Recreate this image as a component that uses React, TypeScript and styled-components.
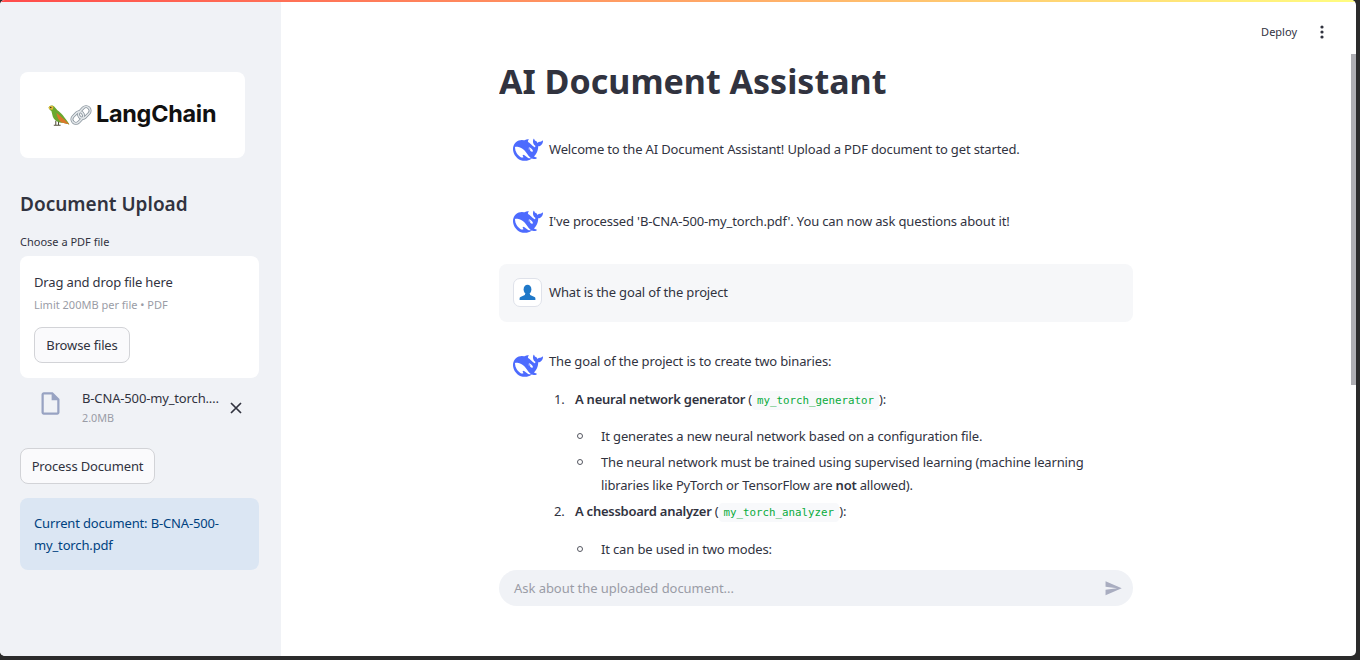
import styled, { createGlobalStyle } from 'styled-components';

const GlobalStyle = createGlobalStyle`
  html, body {
    margin: 0;
    padding: 0;
    background: #2b2b2b;
  }
  * {
    box-sizing: border-box;
  }
`;

const BODY_FONT = `"Noto Sans", "Lato", sans-serif`;

const Page = styled.div`
  width: 1360px;
  height: 660px;
  padding: 0 4px 4px 0;
  background: #2b2b2b;
  font-family: ${BODY_FONT};
  font-size: 13px;
  letter-spacing: -0.15px;
  color: #31333f;
  overflow: hidden;
`;

const Frame = styled.div`
  position: relative;
  display: flex;
  height: 100%;
  border-radius: 5px;
  overflow: hidden;
  background: #fff;
`;

const TopBar = styled.div`
  position: absolute;
  inset: 0 0 auto 0;
  height: 2px;
  background: linear-gradient(90deg, #ff4b4b, #fffd80);
`;

const Sidebar = styled.aside`
  flex: 0 0 281px;
  padding: 72px 22px 0 20px;
  background: #f0f2f6;
`;

const LogoCard = styled.div`
  display: flex;
  align-items: center;
  width: 225px;
  height: 86px;
  padding-left: 27px;
  border-radius: 8px;
  background: #fff;
`;

const LogoText = styled.span`
  margin: 0 0 3px 4px;
  font-family: "Inter", sans-serif;
  font-size: 23.4px;
  font-weight: 700;
  letter-spacing: -0.25px;
  color: #111;
`;

const SideHeading = styled.h2`
  margin: 31px 0 0;
  font-size: 19px;
  line-height: 30px;
  font-weight: 600;
  letter-spacing: 0;
`;

const FieldLabel = styled.div`
  margin-top: 15px;
  font-size: 11px;
  line-height: 16px;
  letter-spacing: 0;
`;

const DropZone = styled.div`
  margin-top: 6px;
  padding: 14px;
  height: 122px;
  border-radius: 8px;
  background: #fff;
`;

const DropTitle = styled.div`
  line-height: 24px;
`;

const DropHint = styled.div`
  margin-top: 1px;
  font-size: 11px;
  line-height: 20px;
  letter-spacing: 0;
  color: #9a9ca6;
`;

const Button = styled.button`
  display: block;
  height: 36px;
  padding: 0;
  border: 1px solid #d2d3d7;
  border-radius: 8px;
  background: #fafafc;
  font: inherit;
  letter-spacing: inherit;
  color: #31333f;
  white-space: nowrap;
`;

const BrowseButton = styled(Button)`
  margin-top: 12px;
  width: 96px;
`;

const ProcessButton = styled(Button)`
  margin-top: 19px;
  width: 135px;
`;

const FileRow = styled.div`
  display: flex;
  align-items: center;
  margin-top: 9px;
  height: 42px;
  padding-left: 17px;
`;

const FileIcon = styled.svg`
  flex: 0 0 27px;
  width: 27px;
  height: 27px;
  margin-top: -10px;
  fill: #98a3c2;
`;

const FileInfo = styled.div`
  width: 144px;
  margin-left: 18px;
`;

const FileName = styled.div`
  line-height: 20px;
  white-space: nowrap;
  overflow: hidden;
`;

const FileSize = styled.div`
  font-size: 10.8px;
  line-height: 20px;
  letter-spacing: 0;
  color: #9a9ca6;
`;

const CloseIcon = styled.svg`
  width: 14px;
  height: 14px;
  margin-left: 3px;
  stroke: #31333f;
  stroke-width: 1.7;
`;

const InfoBox = styled.div`
  margin-top: 14px;
  padding: 14px;
  height: 72px;
  border-radius: 8px;
  background: #dbe6f3;
  color: #004280;
  line-height: 22px;
`;

const Main = styled.main`
  position: relative;
  flex: 1;
  display: flex;
  flex-direction: column;
  padding-right: 5px;
`;

const Toolbar = styled.div`
  position: absolute;
  top: 24px;
  right: 26px;
  display: flex;
  align-items: center;
  gap: 17px;
  font-size: 11px;
  line-height: 16px;
  letter-spacing: 0;
`;

const Kebab = styled.svg`
  width: 16px;
  height: 16px;
  fill: #31333f;
`;

const Scrollbar = styled.div`
  position: absolute;
  top: 54px;
  right: 0;
  width: 5px;
  height: 331px;
  background: #aeaeb3;
`;

const ChatColumn = styled.div`
  width: 634px;
  margin: 0 auto;
  display: flex;
  flex-direction: column;
`;

const ScrollArea = styled.div`
  height: 558px;
  overflow: hidden;
`;

const Title = styled.h1`
  margin: 0;
  padding-top: 56px;
  height: 120px;
  font-size: 34px;
  line-height: 50px;
  font-weight: 700;
  letter-spacing: 0;
`;

const Message = styled.div<{ $user?: boolean }>`
  display: flex;
  gap: 7px;
  padding: 14px;
  margin-bottom: 14px;
  min-height: 58px;
  border-radius: 8px;
  background: ${(p) => (p.$user ? '#f6f7f9' : 'transparent')};
`;

const AvatarBox = styled.div<{ $boxed?: boolean }>`
  flex: 0 0 29px;
  width: 29px;
  height: 29px;
  display: flex;
  align-items: center;
  justify-content: center;
  border-radius: 7px;
  border: ${(p) => (p.$boxed ? '1px solid #dfe2ea' : 'none')};
  background: #fff;
`;

const WhaleIcon = styled.svg`
  flex: none;
  width: 30px;
  height: 30px;
  margin-top: 2px;
  fill: #4d6bfe;
`;

const MessageBody = styled.div<{ $top?: number }>`
  flex: 1;
  padding-top: ${(p) => p.$top ?? 0}px;
  line-height: 23px;

  p {
    margin: 0;
  }
`;

const OrderedList = styled.ol`
  margin: 15px 0 0;
  padding-left: 26px;
  list-style: none;
  counter-reset: step;
`;

const BulletList = styled.ul<{ $gap?: number }>`
  margin: ${(p) => p.$gap ?? 14}px 0 0;
  padding-left: 26px;
  list-style: none;
`;

const Step = styled.li`
  margin-top: 3px;
  counter-increment: step;

  &::before {
    content: counter(step) '.';
    display: inline-block;
    width: 21px;
    margin-left: -21px;
  }
`;

const Bullet = styled.li`
  & + & {
    margin-top: 3px;
  }

  &::before {
    content: '';
    box-sizing: border-box;
    display: inline-block;
    width: 6px;
    height: 6px;
    margin-left: -24px;
    margin-right: 18px;
    border: 1.2px solid #555761;
    border-radius: 50%;
    vertical-align: 2px;
  }
`;

const Strong = styled.strong`
  font-weight: 600;
  letter-spacing: -0.25px;
`;

const Code = styled.code`
  padding: 3px 5px;
  border-radius: 4px;
  background: #f8f9fb;
  font-family: "DejaVu Sans Mono", monospace;
  font-size: 10.8px;
  line-height: 1;
  letter-spacing: 0;
  color: #09ab3b;
`;

const ChatInput = styled.div`
  display: flex;
  align-items: center;
  justify-content: space-between;
  margin-top: 12px;
  height: 36px;
  padding: 0 11px 0 15px;
  border-radius: 18px;
  background: #f0f2f6;
  letter-spacing: -0.05px;
  color: #9a9ca6;
`;

const SendIcon = styled.svg`
  width: 18.5px;
  height: 18.5px;
  fill: #a9adc0;
`;

function Whale() {
  return (
    <WhaleIcon viewBox="0 0 24 24">
      <path d="M23.748 4.482c-.254-.124-.364.113-.512.234-.051.039-.094.09-.137.136-.372.397-.806.657-1.373.626-.829-.046-1.537.214-2.163.848-.133-.782-.575-1.248-1.247-1.548-.352-.156-.708-.311-.955-.65-.172-.241-.219-.51-.305-.774-.055-.16-.11-.323-.293-.35-.2-.031-.278.136-.356.276-.313.572-.434 1.202-.422 1.84.027 1.436.633 2.58 1.838 3.393.137.093.172.187.129.323-.082.28-.18.552-.266.833-.055.179-.137.217-.329.14a5.526 5.526 0 01-1.736-1.18c-.857-.828-1.631-1.742-2.597-2.458a11.365 11.365 0 00-.689-.471c-.985-.957.13-1.743.388-1.836.27-.098.093-.432-.779-.428-.872.004-1.67.295-2.687.684a3.055 3.055 0 01-.465.137 9.597 9.597 0 00-2.883-.102c-1.885.21-3.39 1.102-4.497 2.623C.082 8.606-.231 10.684.152 12.85c.403 2.284 1.569 4.175 3.36 5.653 1.858 1.533 3.997 2.284 6.438 2.14 1.482-.085 3.133-.284 4.994-1.86.47.234.962.327 1.78.397.63.059 1.236-.03 1.705-.128.735-.156.684-.837.419-.961-2.155-1.004-1.682-.595-2.113-.926 1.096-1.296 2.746-2.642 3.392-7.003.05-.347.007-.565 0-.845-.004-.17.035-.237.23-.256a4.173 4.173 0 001.545-.475c1.396-.763 1.96-2.015 2.093-3.517.02-.23-.004-.467-.247-.588zM11.581 18c-2.089-1.642-3.102-2.183-3.52-2.16-.392.024-.321.471-.235.763.09.288.207.486.371.739.114.167.192.416-.113.603-.673.416-1.842-.14-1.897-.167-1.361-.802-2.5-1.86-3.301-3.307-.774-1.393-1.224-2.887-1.298-4.482-.02-.386.093-.522.477-.592a4.696 4.696 0 011.529-.039c2.132.312 3.946 1.265 5.468 2.774.868.86 1.525 1.887 2.202 2.891.72 1.066 1.494 2.082 2.48 2.914.348.292.625.514.891.677-.802.09-2.14.11-3.054-.614zm1-6.44a.306.306 0 01.415-.287.302.302 0 01.2.288.306.306 0 01-.31.307.303.303 0 01-.304-.308zm3.11 1.596c-.2.081-.399.151-.59.16a1.245 1.245 0 01-.798-.254c-.274-.23-.47-.358-.552-.758a1.73 1.73 0 01.016-.588c.07-.327-.008-.537-.239-.727-.187-.156-.426-.199-.688-.199a.559.559 0 01-.254-.078c-.11-.054-.2-.19-.114-.358.028-.054.16-.186.192-.21.356-.202.767-.136 1.146.016.352.144.618.408 1.001.782.391.451.462.576.685.914.176.265.336.537.445.848.067.195-.019.354-.25.452z" />
    </WhaleIcon>
  );
}

function Person() {
  return (
    <svg width="17" height="17" viewBox="0 0 17 17" fill="#1f78c8">
      <ellipse cx="8.5" cy="5.5" rx="3.9" ry="4.8" />
      <path d="M6.2 9.5h4.6l.4 1.6 4.3 2c.6.3.9.8.9 1.4V16H.6v-1.5c0-.6.3-1.1.9-1.4l4.3-2z" />
    </svg>
  );
}

function Parrot() {
  return (
    <svg width="23" height="23" viewBox="0 0 22 22">
      <path d="M1.5 3.5 C2.5 .8 6 .8 7.5 3 L10 6 C13.5 8.5 16.5 12 21.5 19.5 L15 18 C11 18 7 16 5.5 12 L4.2 6.8 C3.2 6.2 2 5 1.5 3.5Z" fill="#6aa82e" />
      <path d="M1.5 3.5 C2.5 1.2 5 1.2 6.2 2.5 L5.5 5.2 C4 5.8 2 5 1.5 3.5Z" fill="#e2b93a" />
      <path d="M9 8.5 C12 10.5 16 14 21.5 19.5 L15 18 C12 17 10 13.5 9 8.5Z" fill="#d9772b" />
      <circle cx="3.6" cy="3.4" r=".7" fill="#2b2b2b" />
      <path d="M8.4 16v4M11 17v3M6.5 20.3h6.5" stroke="#55503c" strokeWidth="1" fill="none" />
    </svg>
  );
}

function ChainLink() {
  return (
    <svg width="22" height="22" viewBox="0 0 22 22" fill="none">
      <g stroke="#87929b" strokeWidth="3">
        <rect x="1.2" y="9.5" width="13" height="8" rx="4" transform="rotate(-45 7.7 13.5)" />
        <rect x="7.8" y="4.5" width="13" height="8" rx="4" transform="rotate(-45 14.3 8.5)" />
      </g>
      <g stroke="#e3e7ea" strokeWidth="1.5">
        <rect x="1.2" y="9.5" width="13" height="8" rx="4" transform="rotate(-45 7.7 13.5)" />
        <rect x="7.8" y="4.5" width="13" height="8" rx="4" transform="rotate(-45 14.3 8.5)" />
      </g>
    </svg>
  );
}

export default function App() {
  return (
    <Page>
      <GlobalStyle />
      <Frame>
        <TopBar />
        <Sidebar>
          <LogoCard>
            <Parrot />
            <ChainLink />
            <LogoText>LangChain</LogoText>
          </LogoCard>
          <SideHeading>Document Upload</SideHeading>
          <FieldLabel>Choose a PDF file</FieldLabel>
          <DropZone>
            <DropTitle>Drag and drop file here</DropTitle>
            <DropHint>Limit 200MB per file • PDF</DropHint>
            <BrowseButton>Browse files</BrowseButton>
          </DropZone>
          <FileRow>
            <FileIcon viewBox="0 0 24 24">
              <path d="M14 2H6c-1.1 0-1.99.9-1.99 2L4 20c0 1.1.89 2 1.99 2H18c1.1 0 2-.9 2-2V8l-6-6zM6 20V4h7v5h5v11H6z" />
            </FileIcon>
            <FileInfo>
              <FileName>B-CNA-500-my_torch.…</FileName>
              <FileSize>2.0MB</FileSize>
            </FileInfo>
            <CloseIcon viewBox="0 0 14 14">
              <path d="M2 2l10 10M12 2L2 12" />
            </CloseIcon>
          </FileRow>
          <ProcessButton>Process Document</ProcessButton>
          <InfoBox>Current document: B-CNA-500-my_torch.pdf</InfoBox>
        </Sidebar>
        <Main>
          <Toolbar>
            <span>Deploy</span>
            <Kebab viewBox="0 0 16 16">
              <circle cx="8" cy="3" r="1.6" />
              <circle cx="8" cy="8" r="1.6" />
              <circle cx="8" cy="13" r="1.6" />
            </Kebab>
          </Toolbar>
          <Scrollbar />
          <ChatColumn>
            <ScrollArea>
              <Title>AI Document Assistant</Title>
              <Message>
                <AvatarBox><Whale /></AvatarBox>
                <MessageBody $top={4}>Welcome to the AI Document Assistant! Upload a PDF document to get started.</MessageBody>
              </Message>
              <Message>
                <AvatarBox><Whale /></AvatarBox>
                <MessageBody $top={4}>I've processed 'B-CNA-500-my_torch.pdf'. You can now ask questions about it!</MessageBody>
              </Message>
              <Message $user>
                <AvatarBox $boxed><Person /></AvatarBox>
                <MessageBody $top={3}>What is the goal of the project</MessageBody>
              </Message>
              <Message>
                <AvatarBox><Whale /></AvatarBox>
                <MessageBody>
                  <p>The goal of the project is to create two binaries:</p>
                  <OrderedList>
                    <Step>
                      <Strong>A neural network generator</Strong> (<Code>my_torch_generator</Code>):
                      <BulletList>
                        <Bullet>It generates a new neural network based on a configuration file.</Bullet>
                        <Bullet>The neural network must be trained using supervised learning (machine learning libraries like PyTorch or TensorFlow are <Strong>not</Strong> allowed).</Bullet>
                      </BulletList>
                    </Step>
                    <Step>
                      <Strong>A chessboard analyzer</Strong> (<Code>my_torch_analyzer</Code>):
                      <BulletList $gap={15}>
                        <Bullet>It can be used in two modes:</Bullet>
                      </BulletList>
                    </Step>
                  </OrderedList>
                </MessageBody>
              </Message>
            </ScrollArea>
            <ChatInput>
              <span>Ask about the uploaded document...</span>
              <SendIcon viewBox="0 0 24 24">
                <path d="M2.01 21L23 12 2.01 3 2 10l15 2-15 2z" />
              </SendIcon>
            </ChatInput>
          </ChatColumn>
        </Main>
      </Frame>
    </Page>
  );
}
